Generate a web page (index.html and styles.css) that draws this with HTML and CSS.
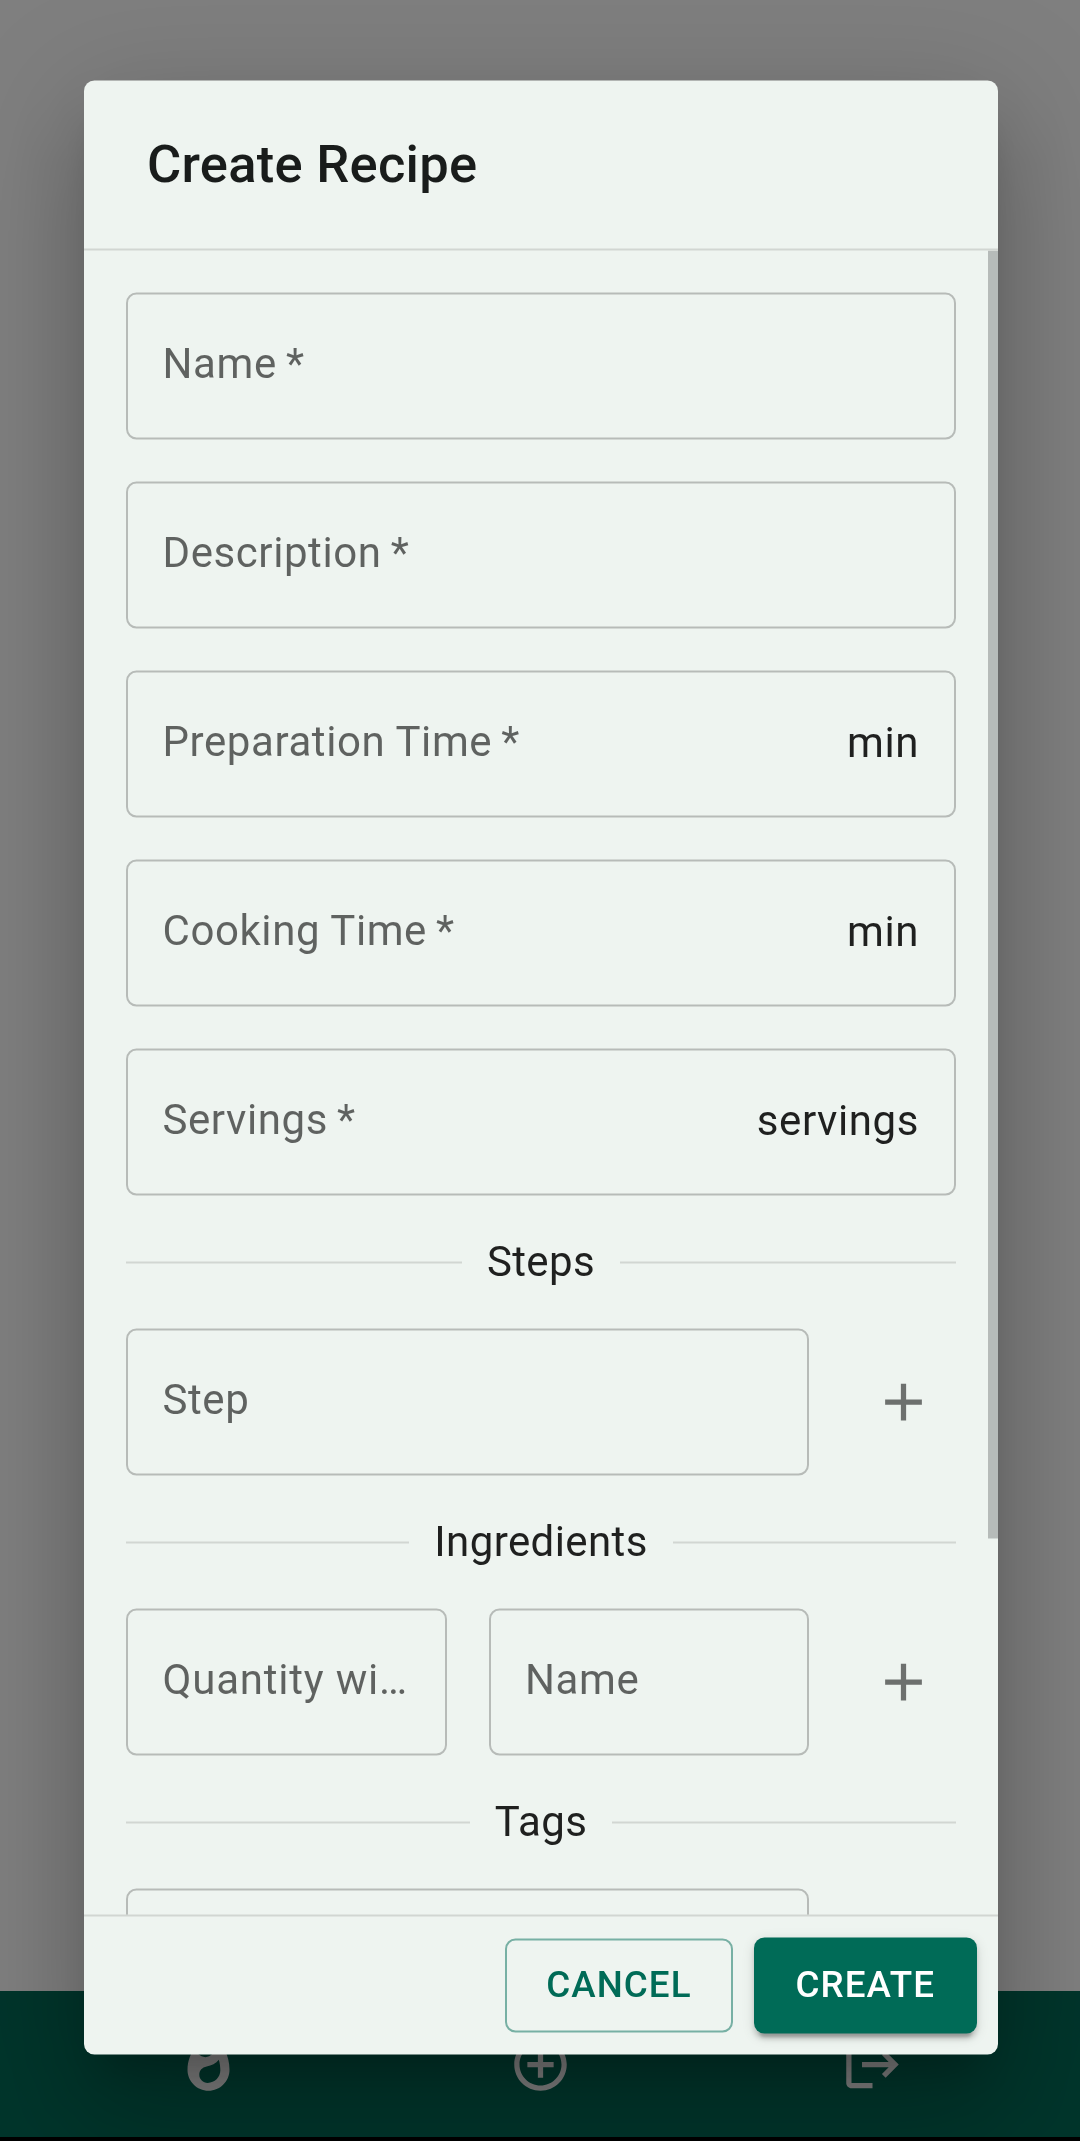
FILE: index.html
```html
<!DOCTYPE html>
<html lang="en">
<head>
<meta charset="utf-8">
<title>Create Recipe</title>
<link rel="stylesheet" href="styles.css">
</head>
<body>
<div class="app">
  <nav class="bottom-nav">
    <a class="nav-item"><svg class="icon" viewBox="0 0 24 24"><path d="M13.5.67s.74 2.65.74 4.8c0 2.06-1.35 3.73-3.41 3.73-2.07 0-3.63-1.67-3.63-3.73l.03-.36C5.21 7.51 4 10.62 4 14c0 4.42 3.58 8 8 8s8-3.58 8-8C20 8.61 17.41 3.8 13.5.67zM11.71 19c-1.78 0-3.22-1.4-3.22-3.14 0-1.62 1.05-2.76 2.81-3.12 1.77-.36 3.6-1.21 4.62-2.58.39 1.29.59 2.65.59 4.04 0 2.65-2.15 4.8-4.8 4.8z"/></svg></a>
    <a class="nav-item"><svg class="icon" viewBox="0 0 24 24"><path d="M13 7h-2v4H7v2h4v4h2v-4h4v-2h-4V7zm-1-5C6.48 2 2 6.48 2 12s4.48 10 10 10 10-4.48 10-10S17.52 2 12 2zm0 18c-4.41 0-8-3.59-8-8s3.59-8 8-8 8 3.59 8 8-3.59 8-8 8z"/></svg></a>
    <a class="nav-item"><svg class="icon" viewBox="0 0 24 24"><path d="M17 7l-1.41 1.41L18.17 11H8v2h10.17l-2.58 2.58L17 17l5-5zM4 5h8V3H4c-1.1 0-2 .9-2 2v14c0 1.1.9 2 2 2h8v-2H4V5z"/></svg></a>
  </nav>
</div>
<div class="backdrop">
  <section class="dialog" role="dialog">
    <h2 class="dialog-title">Create Recipe</h2>
    <div class="dialog-content">
      <div class="field"><span class="label">Name&thinsp;*</span></div>
      <div class="field"><span class="label">Description&thinsp;*</span></div>
      <div class="field"><span class="label">Preparation Time&thinsp;*</span><span class="unit">min</span></div>
      <div class="field"><span class="label">Cooking Time&thinsp;*</span><span class="unit">min</span></div>
      <div class="field"><span class="label">Servings&thinsp;*</span><span class="unit">servings</span></div>
      <div class="divider"><span>Steps</span></div>
      <div class="row">
        <div class="field"><span class="label">Step</span></div>
        <button class="icon-button" aria-label="Add step"><svg class="icon" viewBox="0 0 24 24"><path d="M19 13h-6v6h-2v-6H5v-2h6V5h2v6h6v2z"/></svg></button>
      </div>
      <div class="divider"><span>Ingredients</span></div>
      <div class="row">
        <div class="field"><span class="label label-long">Quantity wi…</span></div>
        <div class="field"><span class="label">Name</span></div>
        <button class="icon-button" aria-label="Add ingredient"><svg class="icon" viewBox="0 0 24 24"><path d="M19 13h-6v6h-2v-6H5v-2h6V5h2v6h6v2z"/></svg></button>
      </div>
      <div class="divider"><span>Tags</span></div>
      <div class="row">
        <div class="field"></div>
        <div class="icon-button"></div>
      </div>
      <div class="scroll-thumb"></div>
    </div>
    <div class="dialog-actions">
      <button class="button button-outlined">CANCEL</button>
      <button class="button button-contained">CREATE</button>
    </div>
  </section>
</div>
</body>
</html>
```
FILE: styles.css
```css
* { box-sizing: border-box; }

body {
  margin: 0;
  height: 2141px;
  overflow: hidden;
  background: #000;
  color: rgba(0, 0, 0, .87);
  font-family: Roboto, "Liberation Sans", sans-serif;
  font-size: 42px;
  letter-spacing: .00938em;
}

button { margin: 0; border: 0; background: none; font: inherit; }

.icon { display: block; width: 63px; height: 63px; fill: currentColor; }

.app {
  display: flex;
  flex-direction: column;
  justify-content: flex-end;
  height: 2137px;
  background: #fff;
}

.bottom-nav {
  display: flex;
  height: 146px;
  padding: 0 41px 0 42px;
  background: #006b57;
  color: #fff;
}

.nav-item { flex: 1; display: flex; align-items: center; justify-content: center; }

.backdrop {
  position: fixed;
  inset: 0;
  padding: 80px 82px 87px 84px;
  background: rgba(0, 0, 0, .5);
}

.dialog {
  display: flex;
  flex-direction: column;
  height: 1974px;
  border-radius: 10.5px;
  background: #eef4f0;
  box-shadow:
    0 29px 39px -18px rgba(0, 0, 0, .2),
    0 63px 100px 8px rgba(0, 0, 0, .14),
    0 24px 121px 21px rgba(0, 0, 0, .12);
  transform: translateY(.5px);
  will-change: transform;
}

.dialog-title {
  margin: 0;
  padding: 41px 63px 43px;
  color: #191c1b;
  font-size: 52.5px;
  font-weight: 500;
  line-height: 84px;
  letter-spacing: .005em;
}

.dialog-content {
  position: relative;
  flex: 1;
  min-height: 0;
  overflow: hidden;
  padding: 42px;
  border-top: 2px solid rgba(0, 0, 0, .12);
  border-bottom: 2px solid rgba(0, 0, 0, .12);
}

.field {
  display: flex;
  align-items: center;
  justify-content: space-between;
  flex: 1;
  min-width: 0;
  height: 147px;
  padding: 0 35px 0 34.5px;
  border: 2px solid rgba(0, 0, 0, .23);
  border-radius: 10.5px;
  letter-spacing: .0138em;
}

.field + .field { margin-top: 42px; }

.label {
  margin-bottom: 6px;
  color: rgba(0, 0, 0, .6);
  line-height: 60px;
  white-space: nowrap;
}

.label-long { letter-spacing: .019em; }

.unit { margin-bottom: 4px; line-height: 63px; }

.divider {
  display: flex;
  align-items: center;
  gap: 25px;
  height: 49px;
  margin: 42px 0;
}

.divider span { margin-bottom: 2px; line-height: 63px; }

.divider::before,
.divider::after {
  content: "";
  flex: 1;
  height: 2px;
  background: rgba(0, 0, 0, .12);
}

.row { display: flex; align-items: center; gap: 42px; }
.row .field { margin: 0; }

.icon-button {
  flex: none;
  width: 105px;
  height: 105px;
  padding: 21px;
  color: rgba(0, 0, 0, .54);
}

.scroll-thumb {
  position: absolute;
  top: 0;
  right: 0;
  width: 10px;
  height: 1288px;
  background: #b6bbb9;
}

.dialog-actions {
  display: flex;
  align-items: center;
  justify-content: flex-end;
  gap: 21px;
  padding: 21px;
}

.button {
  border-radius: 10.5px;
  font-size: 36.75px;
  font-weight: 500;
  letter-spacing: .02857em;
}

.button-outlined {
  height: 94px;
  padding: 0 39px 3px;
  border: 2px solid rgba(0, 107, 87, .5);
  color: #006b57;
}

.button-contained {
  height: 96px;
  padding: 0 42px 3px;
  background: #006b57;
  color: #fff;
  box-shadow:
    0 8px 3px -5px rgba(0, 0, 0, .2),
    0 5px 5px 0 rgba(0, 0, 0, .14),
    0 3px 13px 0 rgba(0, 0, 0, .12);
}
```
